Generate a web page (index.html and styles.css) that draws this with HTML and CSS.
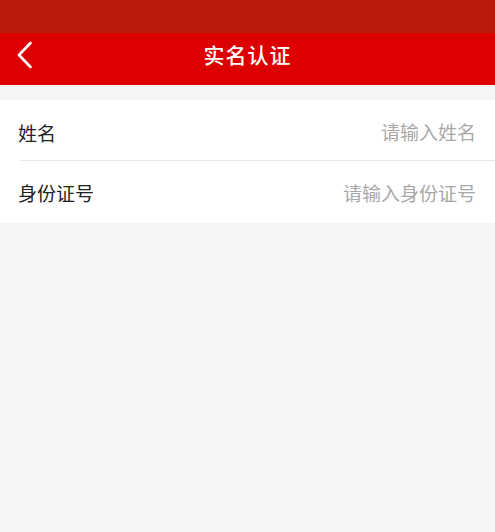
FILE: index.html
```html
<!DOCTYPE html>
<html lang="zh">
<head>
<meta charset="utf-8">
<link rel="stylesheet" href="styles.css">
</head>
<body>
<div class="statusbar"></div>
<header class="navbar">
  <span class="back">
    <svg width="17" height="28" viewBox="0 0 17 28"><path d="M14.5 2 L3 14 L14.5 26" fill="none" stroke="#fff" stroke-width="2.6" stroke-linecap="round" stroke-linejoin="round"/></svg>
  </span>
  <h1 class="title">实名认证</h1>
</header>
<main class="card">
  <div class="row">
    <span class="label">姓名</span>
    <span class="placeholder">请输入姓名</span>
  </div>
  <div class="row">
    <span class="label">身份证号</span>
    <span class="placeholder">请输入身份证号</span>
  </div>
</main>
</body>
</html>
```
FILE: styles.css
```css
html, body {
  margin: 0;
  padding: 0;
}
body {
  width: 495px;
  height: 532px;
  background: #f8f6f4;
  font-family: "Noto Sans CJK SC", "Noto Sans", sans-serif;
  overflow: hidden;
}
.statusbar {
  height: 33px;
  background: #b91a0c;
}
.navbar {
  height: 41px;
  padding-bottom: 11px;
  background: #dc0000;
  display: flex;
  align-items: center;
  justify-content: center;
  position: relative;
}
.back {
  position: absolute;
  left: 16px;
  top: 8px;
  display: flex;
}
.title {
  margin: 0;
  color: #fff;
  font-size: 21px;
  font-weight: 500;
  letter-spacing: 1px;
}
.card {
  margin-top: 15px;
  background: #fff;
  padding-left: 20px;
}
.row {
  height: 60px;
  display: flex;
  align-items: center;
  justify-content: space-between;
  padding-right: 19px;
}
.row + .row {
  border-top: 1px solid #e6e6e6;
  height: 62px;
}
.label {
  font-size: 19px;
  color: #222;
  margin-left: -2px;
}
.row:first-child .label {
  margin-top: 4px;
}
.placeholder {
  font-size: 19px;
  color: #a8a8a8;
}
.row:first-child .placeholder {
  margin-top: 2px;
}
```
